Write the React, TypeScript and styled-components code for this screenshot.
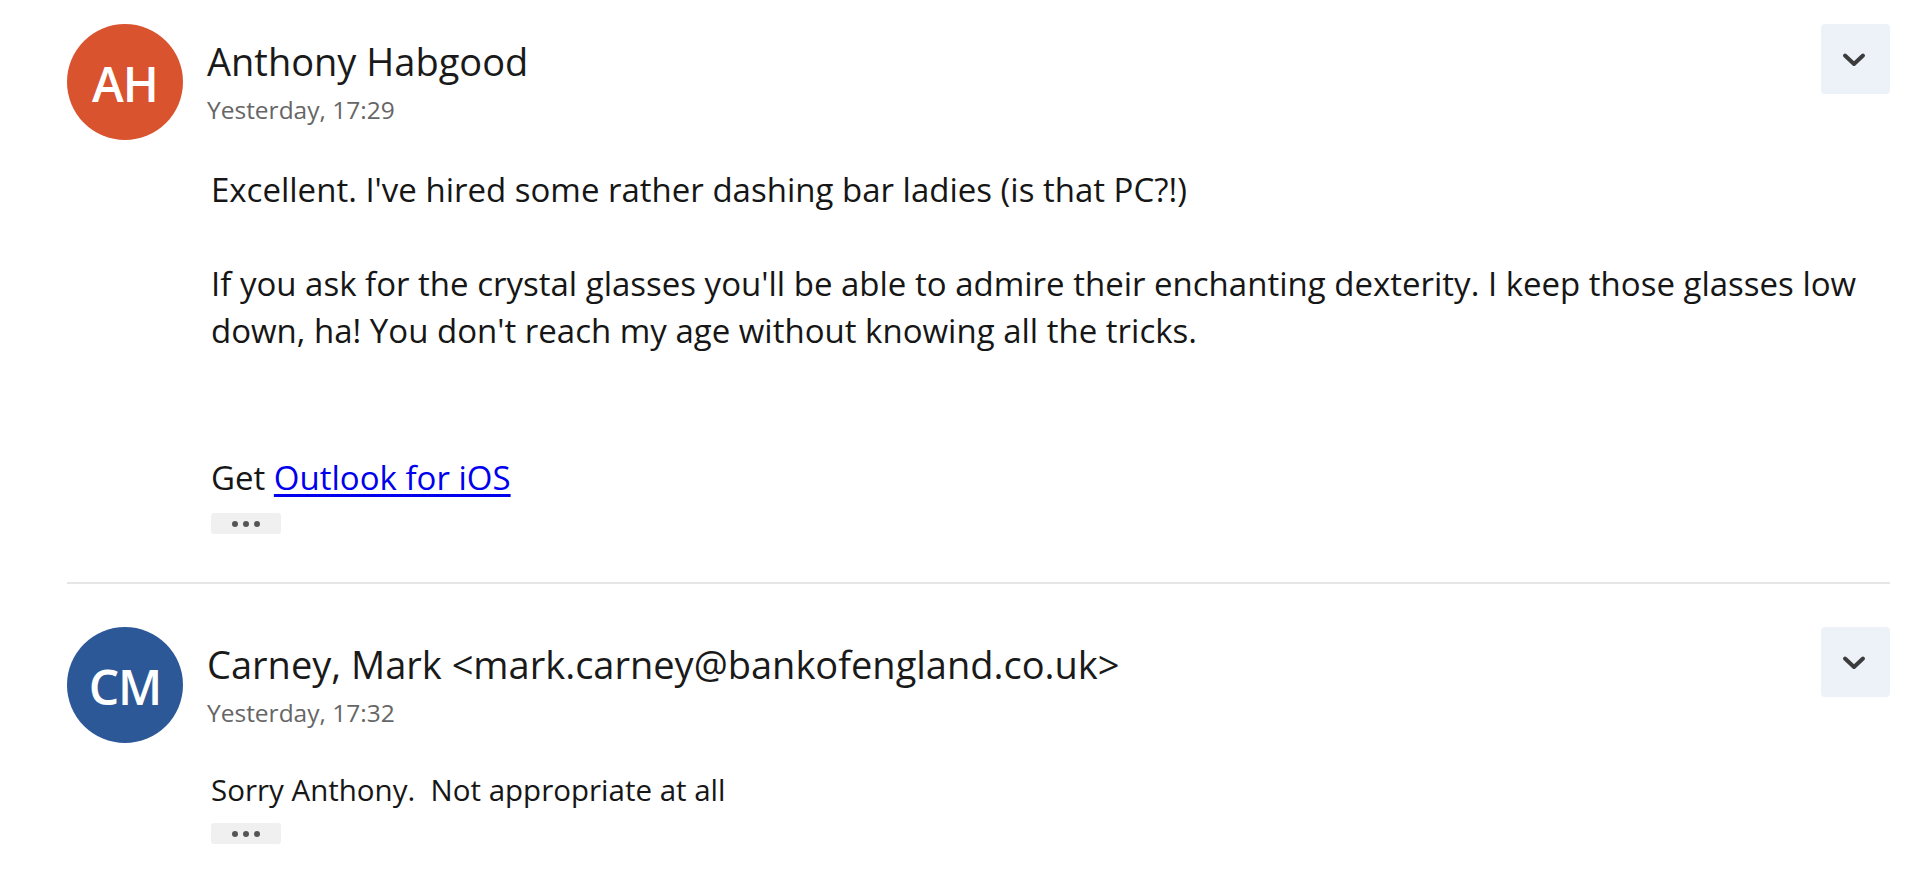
import React from 'react'
import styled, { createGlobalStyle } from 'styled-components'

const GlobalStyle = createGlobalStyle`
  html, body {
    margin: 0;
    padding: 0;
    background: #ffffff;
  }
  body {
    font-family: 'Open Sans', 'Noto Sans', 'Liberation Sans', sans-serif;
    color: #1b1b1b;
  }
`

const Thread = styled.div`
  padding: 24px 30px 0 67px;
`

const Message = styled.div`
  display: flex;
  align-items: flex-start;
  padding-bottom: 48px;
`

const Divider = styled.hr`
  margin: 0 0 43px;
  border: none;
  border-top: 2px solid #e6e6e6;
`

const Avatar = styled.div<{ bg: string }>`
  flex: 0 0 116px;
  width: 116px;
  height: 116px;
  border-radius: 50%;
  background: ${({ bg }) => bg};
  color: #ffffff;
  display: flex;
  align-items: center;
  justify-content: center;
  font-size: 48px;
  font-weight: 600;
  letter-spacing: -1px;
  padding-top: 3px;
  box-sizing: border-box;
`

const Content = styled.div`
  flex: 1;
  margin-left: 24px;
  min-width: 0;
`

const Header = styled.div`
  display: flex;
  justify-content: space-between;
  align-items: flex-start;
`

const Who = styled.div`
  display: flex;
  flex-direction: column;
  padding-top: 14px;
`

const Name = styled.div`
  font-size: 38px;
  line-height: 46px;
  color: #1a1a1a;
  white-space: nowrap;
`

const When = styled.div`
  font-size: 24.5px;
  line-height: 32px;
  color: #666666;
  margin-top: 10px;
`

const ExpandButton = styled.button`
  width: 69px;
  height: 70px;
  border: none;
  border-radius: 4px;
  background: #edf2f9;
  display: flex;
  align-items: center;
  justify-content: center;
  padding: 2px 3px 0 0;
  cursor: pointer;
`

const Body = styled.div<{ size: number; lh: number }>`
  margin-top: 40px;
  padding-left: 4px;
  font-size: ${({ size }) => size}px;
  line-height: ${({ lh }) => lh}px;
  color: #161616;
`

const Para = styled.p<{ gap?: number }>`
  margin: 0 0 ${({ gap }) => gap ?? 0}px;
`

const Link = styled.a`
  color: #0000ee;
  text-decoration: underline;
  text-underline-offset: 4px;
`

const MoreButton = styled.div`
  width: 70px;
  height: 21px;
  margin: 12px 0 0 4px;
  border-radius: 3px;
  background: #f0f0f0;
  display: flex;
  align-items: center;
  justify-content: center;
  gap: 5px;
`

const Dot = styled.span`
  width: 6px;
  height: 6px;
  border-radius: 50%;
  background: #555555;
`

const Chevron = () => (
  <svg width="26" height="16" viewBox="0 0 26 16">
    <path d="M4 3.5 L13 12 L22 3.5" fill="none" stroke="#3c3c3c" strokeWidth="4" strokeLinecap="round" strokeLinejoin="round" />
  </svg>
)

const More = () => (
  <MoreButton>
    <Dot />
    <Dot />
    <Dot />
  </MoreButton>
)

const App = () => {
  return (
    <>
      <GlobalStyle />
      <Thread>
        <Message>
          <Avatar bg="#d9532e">AH</Avatar>
          <Content>
            <Header>
              <Who>
                <Name>Anthony Habgood</Name>
                <When>Yesterday, 17:29</When>
              </Who>
              <ExpandButton>
                <Chevron />
              </ExpandButton>
            </Header>
            <Body size={33} lh={47}>
              <Para gap={47}>Excellent. I've hired some rather dashing bar ladies (is that PC?!)</Para>
              <Para gap={100}>
                If you ask for the crystal glasses you'll be able to admire their enchanting dexterity. I keep those glasses low
                <br />
                down, ha! You don't reach my age without knowing all the tricks.
              </Para>
              <Para>
                Get <Link href="#">Outlook for iOS</Link>
              </Para>
            </Body>
            <More />
          </Content>
        </Message>
        <Divider />
        <Message>
          <Avatar bg="#2c5898">CM</Avatar>
          <Content>
            <Header>
              <Who>
                <Name>Carney, Mark &lt;mark.carney@bankofengland.co.uk&gt;</Name>
                <When>Yesterday, 17:32</When>
              </Who>
              <ExpandButton>
                <Chevron />
              </ExpandButton>
            </Header>
            <Body size={29.5} lh={42}>
              <Para>Sorry Anthony.&nbsp; Not appropriate at all</Para>
            </Body>
            <More />
          </Content>
        </Message>
      </Thread>
    </>
  )
}

export default App
